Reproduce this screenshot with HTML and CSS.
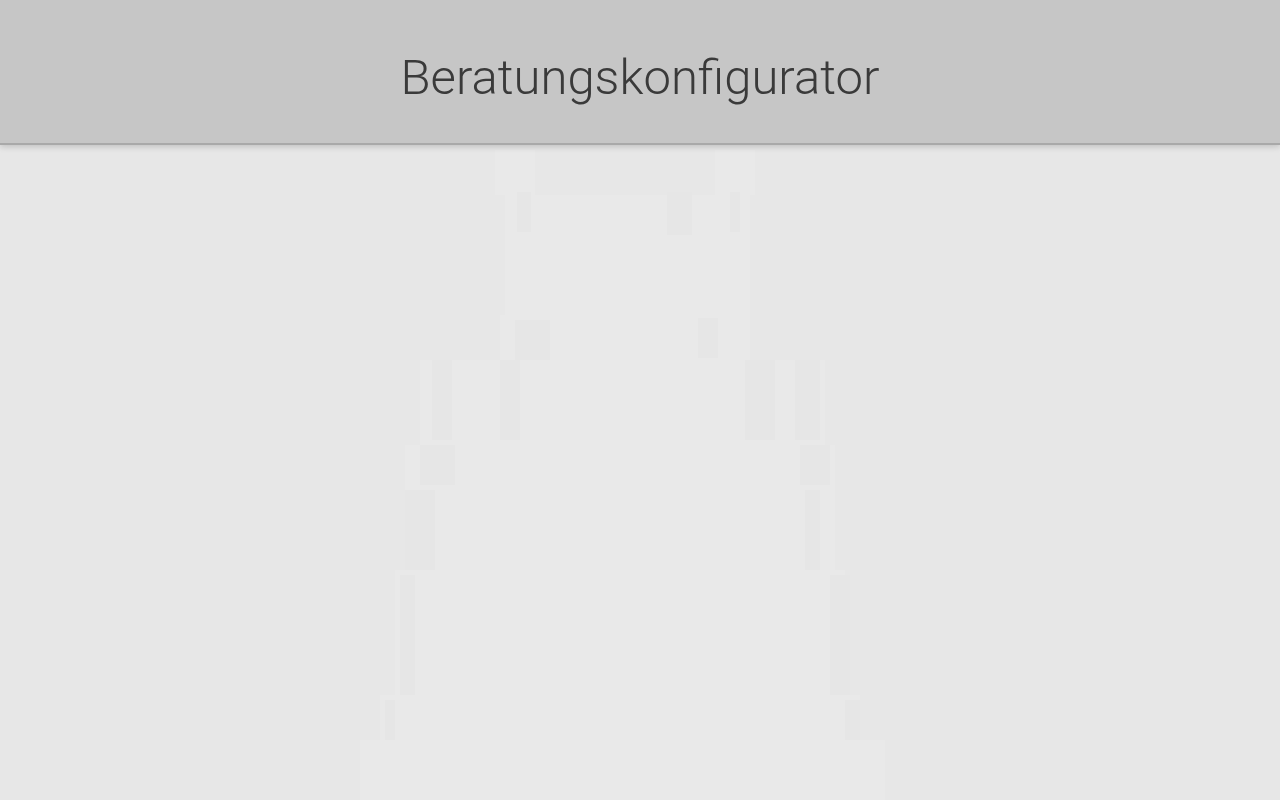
FILE: index.html
```html
<!DOCTYPE html>
<html lang="de">
<head>
<meta charset="utf-8">
<title>Beratungskonfigurator</title>
<link rel="stylesheet" href="styles.css">
</head>
<body>
<header class="topbar">
  <h1 class="title">Beratungskonfigurator</h1>
</header>
<main class="stage">
  <svg class="ghost" width="1280" height="655" viewBox="0 145 1280 655" aria-hidden="true">
    <g fill="#e9e9e9">
      <rect x="495" y="150" width="40" height="45"/>
      <rect x="715" y="150" width="40" height="45"/>
      <rect x="505" y="195" width="245" height="120"/>
      <rect x="500" y="315" width="250" height="45"/>
      <rect x="420" y="360" width="405" height="85"/>
      <rect x="405" y="445" width="430" height="125"/>
      <rect x="395" y="570" width="450" height="125"/>
      <rect x="380" y="695" width="480" height="45"/>
      <rect x="360" y="740" width="525" height="60"/>
    </g>
    <g fill="#e6e6e6">
      <rect x="517" y="192" width="14" height="40"/>
      <rect x="667" y="192" width="25" height="43"/>
      <rect x="730" y="192" width="10" height="40"/>
      <rect x="515" y="320" width="35" height="40"/>
      <rect x="698" y="318" width="20" height="40"/>
      <rect x="432" y="360" width="20" height="80"/>
      <rect x="500" y="360" width="20" height="80"/>
      <rect x="745" y="360" width="30" height="80"/>
      <rect x="795" y="360" width="25" height="80"/>
      <rect x="420" y="445" width="35" height="40"/>
      <rect x="800" y="445" width="30" height="40"/>
      <rect x="405" y="490" width="30" height="80"/>
      <rect x="805" y="490" width="15" height="80"/>
      <rect x="400" y="575" width="15" height="120"/>
      <rect x="830" y="575" width="20" height="120"/>
      <rect x="385" y="700" width="10" height="40"/>
      <rect x="845" y="700" width="15" height="40"/>
    </g>
  </svg>
</main>
</body>
</html>
```

FILE: styles.css
```css
html, body {
  margin: 0;
  padding: 0;
  height: 100%;
}

body {
  background: #e7e7e7;
  font-family: Roboto, "Liberation Sans", sans-serif;
  overflow: hidden;
}

.topbar {
  position: relative;
  z-index: 2;
  height: 145px;
  background: #c6c6c6;
  border-bottom: 2px solid #a9a9a9;
  box-shadow: 0 2px 6px rgba(0, 0, 0, 0.16);
  display: flex;
  align-items: center;
  justify-content: center;
  box-sizing: border-box;
}

.title {
  margin: 0;
  font-family: Roboto, "Liberation Sans", sans-serif;
  font-weight: 300;
  font-size: 49px;
  color: #3a3a3a;
  line-height: 1;
  padding-top: 12px;
}

.stage {
  position: relative;
  height: 655px;
  overflow: hidden;
}

.ghost {
  position: absolute;
  left: 0;
  top: 0;
  display: block;
}
```
